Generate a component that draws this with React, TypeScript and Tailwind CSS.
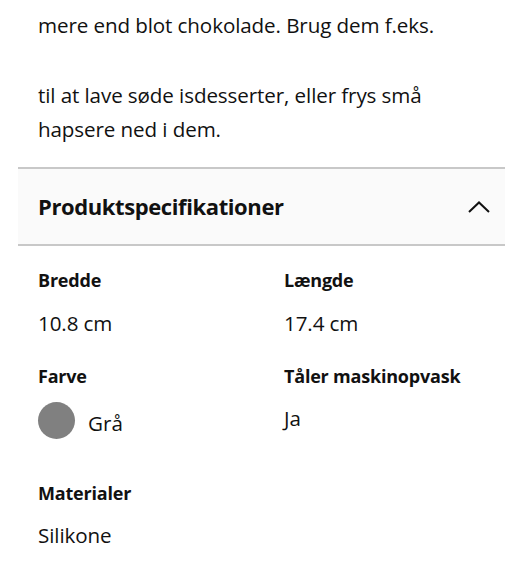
const specs = [
  { label: "Bredde", value: "10.8 cm" },
  { label: "Længde", value: "17.4 cm" },
];

function ChevronUp() {
  return (
    <svg width="22" height="12" viewBox="0 0 22 12" fill="none" className="block">
      <path d="M1 11L11 1.5L21 11" stroke="#111" strokeWidth="2" />
    </svg>
  );
}

export default function App() {
  return (
    <div className="min-h-[575px] bg-white text-[#111] font-['Open_Sans',sans-serif]">
      <div className="px-[38px] text-[20.6px] leading-[34px] tracking-[-0.1px]">
        <p className="pt-[8px]">mere end blot chokolade. Brug dem f.eks.</p>
        <p className="mt-[36px]">til at lave søde isdesserter, eller frys små</p>
        <p>hapsere ned i dem.</p>
      </div>

      <section className="mt-[21px] ml-[18px] mr-[24px]">
        <div className="flex h-[79px] items-center justify-between border-y-2 border-[#c8c8c8] bg-[#fafafa] pl-[20px] pr-[15px]">
          <h2 className="text-[22px] font-bold tracking-[-0.4px]">Produktspecifikationer</h2>
          <ChevronUp />
        </div>

        <div className="grid grid-cols-[246px_1fr] pl-[20px] pt-[19px]">
          {specs.map((spec) => (
            <div key={spec.label}>
              <h3 className="text-[18px] font-bold leading-[30px] tracking-[-0.2px]">{spec.label}</h3>
              <p className="mt-[13px] text-[20.6px] leading-[30px] tracking-[-0.1px]">{spec.value}</p>
            </div>
          ))}

          <div className="mt-[23px]">
            <h3 className="text-[18px] font-bold leading-[30px] tracking-[-0.2px]">Farve</h3>
            <div className="mt-[11px] flex items-center gap-[13px]">
              <span className="h-[37px] w-[37px] rounded-full bg-[#808080]" />
              <span className="pt-[4px] text-[20.6px] leading-[30px]">Grå</span>
            </div>
          </div>
          <div className="mt-[23px]">
            <h3 className="text-[18px] font-bold leading-[30px] tracking-[-0.2px]">Tåler maskinopvask</h3>
            <p className="mt-[12px] text-[20.6px] leading-[30px]">Ja</p>
          </div>

          <div className="col-span-2 mt-[39px]">
            <h3 className="text-[18px] font-bold leading-[30px] tracking-[-0.2px]">Materialer</h3>
            <p className="mt-[12px] text-[20.6px] leading-[30px] tracking-[-0.1px]">Silikone</p>
          </div>
        </div>
      </section>
    </div>
  );
}
